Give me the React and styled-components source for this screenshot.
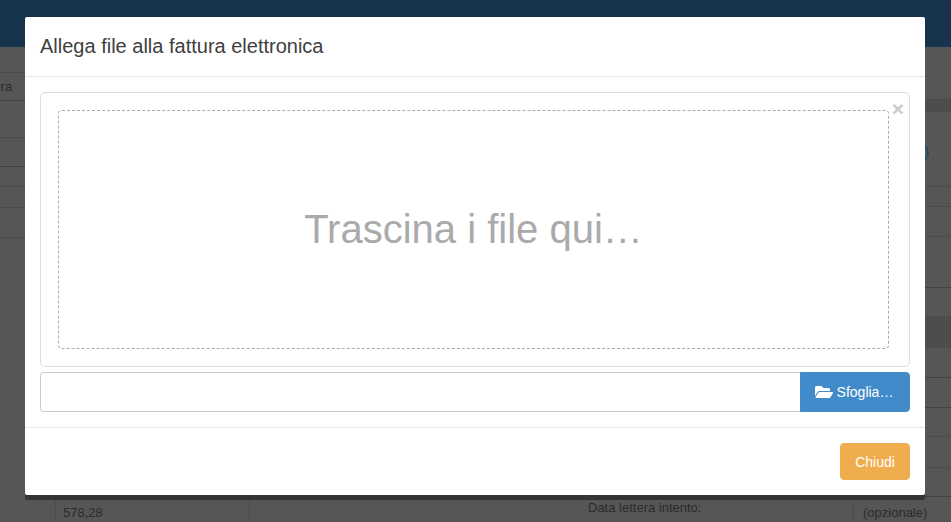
import React from 'react';
import styled, { createGlobalStyle } from 'styled-components';
import { FaFolderOpen } from 'react-icons/fa';

const Global = createGlobalStyle`
  html, body { margin: 0; padding: 0; height: 100%; overflow: hidden; }
  body { font-family: "Liberation Sans", Arial, sans-serif; background: #565656; }
`;

const Page = styled.div`
  position: relative;
  width: 951px;
  height: 522px;
  overflow: hidden;
  background: #565656;
`;
const TopBar = styled.div`
  height: 47px;
  background: #18334e;
`;
const Columns = styled.div`
  display: flex;
  justify-content: space-between;
  height: 475px;
`;
const Column = styled.div`
  width: ${p => p.$w}px;
  display: flex;
  flex-direction: column;
`;
const Row = styled.div`
  box-sizing: border-box;
  flex: 0 0 auto;
  height: ${p => p.$h}px;
  background: ${p => (p.$shade ? '#4d4d4d' : 'transparent')};
  border-bottom: 1px solid ${p => (p.$strong ? '#424242' : '#4c4c4c')};
  font-size: 13px;
  color: #2b2b2b;
  line-height: 28px;
`;
const ClippedText = styled.div`
  margin-left: -29px;
`;
const Footer = styled.div`
  flex: 1;
  display: flex;
  align-items: ${p => (p.$end ? 'flex-end' : 'stretch')};
  font-size: 13px;
  color: #2b2b2b;
`;
const AmountCell = styled.div`
  margin-left: 55px;
  width: 195px;
  height: 24px;
  padding: 7px 0 0 7px;
  box-sizing: border-box;
  border-left: 1px solid #4c4c4c;
  border-right: 1px solid #4c4c4c;
`;
const NoteCell = styled.div`
  margin-left: 2px;
  padding: 8px 0 0 9px;
  border-left: 1px solid #4c4c4c;
  white-space: nowrap;
`;
const CenterLabel = styled.div`
  position: absolute;
  left: 588px;
  top: 500px;
  font-size: 13px;
  color: #2b2b2b;
`;
const RoundBadge = styled.div`
  position: absolute;
  left: 909px;
  top: 143px;
  width: 16px;
  height: 16px;
  border: 2px solid #1e5566;
  border-radius: 50%;
`;

const Modal = styled.div`
  position: absolute;
  left: 25px;
  top: 17px;
  width: 900px;
  height: 478px;
  display: flex;
  flex-direction: column;
  background: #fff;
  border-radius: 2px;
  box-shadow: 0 5px 0 #343434;
  color: #333;
`;
const Header = styled.div`
  box-sizing: border-box;
  height: 60px;
  padding: 0 15px;
  display: flex;
  align-items: center;
  border-bottom: 1px solid #e5e5e5;
`;
const Title = styled.h4`
  margin: 0;
  font-size: 20px;
  font-weight: 400;
  color: #404040;
`;
const Body = styled.div`
  flex: 1;
  padding: 15px;
  display: flex;
  flex-direction: column;
  gap: 5px;
`;
const Preview = styled.div`
  position: relative;
  box-sizing: border-box;
  height: 275px;
  padding: 17px 20px 16px 17px;
  border: 1px solid #ddd;
  border-radius: 5px;
`;
const DropZone = styled.div`
  box-sizing: border-box;
  height: 239px;
  border: 1px dashed #aaa;
  border-radius: 4px;
  display: flex;
  align-items: center;
  justify-content: center;
  font-size: 40px;
  color: #aaa;
`;
const CloseX = styled.span`
  position: absolute;
  right: 5px;
  top: 4px;
  font-size: 21px;
  line-height: 24px;
  font-weight: 700;
  color: #ccc;
`;
const InputGroup = styled.div`
  display: flex;
  height: 40px;
`;
const FileInput = styled.div`
  flex: 1;
  box-sizing: border-box;
  border: 1px solid #ccc;
  border-right: 0;
  border-radius: 4px 0 0 4px;
`;
const Browse = styled.button`
  box-sizing: border-box;
  width: 110px;
  border: 1px solid #428bca;
  border-radius: 0 4px 4px 0;
  background: #428bca;
  color: #fff;
  font: 14px "Liberation Sans", Arial, sans-serif;
  padding: 0 2px 0 0;
  display: flex;
  align-items: center;
  justify-content: center;
  gap: 4px;
`;
const ModalFooter = styled.div`
  box-sizing: border-box;
  height: 68px;
  padding: 15px;
  display: flex;
  justify-content: flex-end;
  border-top: 1px solid #e5e5e5;
`;
const CloseButton = styled.button`
  box-sizing: border-box;
  width: 70px;
  height: 37px;
  border: 1px solid #f0ad4e;
  border-radius: 4px;
  background: #f0ad4e;
  color: #fff;
  font: 14px "Liberation Sans", Arial, sans-serif;
  padding: 0;
`;

const leftRows = [
  { h: 26 }, { h: 28, strong: true, text: 'Fattura' }, { h: 37 }, { h: 29, strong: true },
  { h: 20 }, { h: 21 }, { h: 30 },
];
const rightRows = [
  { h: 53 }, { h: 12, shade: true }, { h: 75 }, { h: 20 }, { h: 30 }, { h: 51, strong: true },
  { h: 29 }, { h: 31, shade: true }, { h: 30, strong: true }, { h: 30, strong: true },
  { h: 29 }, { h: 31 }, { h: 29, strong: true },
];

export default function App() {
  return (
    <Page>
      <Global />
      <TopBar />
      <Columns>
        <Column $w={250}>
          {leftRows.map((r, i) => (
            <Row key={i} $h={r.h} $strong={r.strong}>
              {r.text && <ClippedText>{r.text}</ClippedText>}
            </Row>
          ))}
          <Footer $end>
            <AmountCell>578,28</AmountCell>
          </Footer>
        </Column>
        <Column $w={100}>
          {rightRows.map((r, i) => (
            <Row key={i} $h={r.h} $strong={r.strong} $shade={r.shade} />
          ))}
          <Footer>
            <NoteCell>(opzionale)</NoteCell>
          </Footer>
        </Column>
      </Columns>
      <CenterLabel>Data lettera intento:</CenterLabel>
      <RoundBadge />
      <Modal>
        <Header>
          <Title>Allega file alla fattura elettronica</Title>
        </Header>
        <Body>
          <Preview>
            <DropZone>Trascina i file qui…</DropZone>
            <CloseX>×</CloseX>
          </Preview>
          <InputGroup>
            <FileInput />
            <Browse><FaFolderOpen size={18} /> Sfoglia…</Browse>
          </InputGroup>
        </Body>
        <ModalFooter>
          <CloseButton>Chiudi</CloseButton>
        </ModalFooter>
      </Modal>
    </Page>
  );
}
